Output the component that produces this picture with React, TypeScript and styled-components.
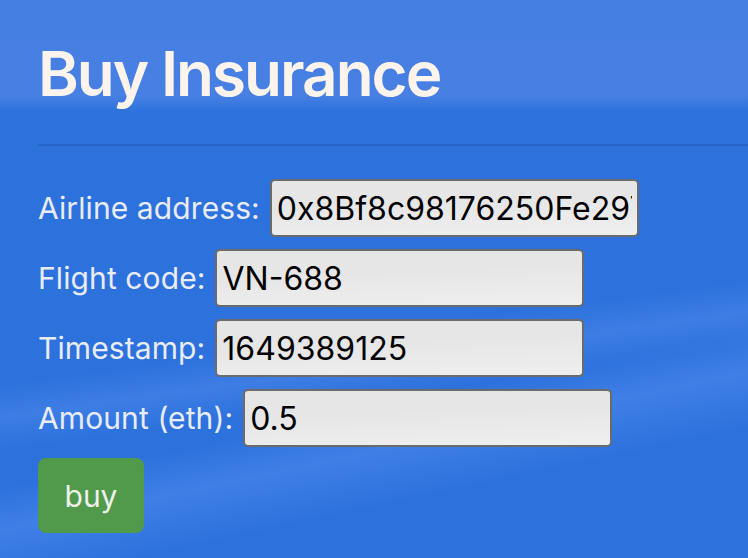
import styled, { createGlobalStyle } from 'styled-components'

const GlobalStyle = createGlobalStyle`
  html, body {
    margin: 0;
    padding: 0;
  }
  body {
    font-family: Inter, "Noto Sans", "Liberation Sans", sans-serif;
  }
`

const Page = styled.div`
  width: 748px;
  height: 558px;
  overflow: hidden;
  background:
    linear-gradient(172deg, rgba(255, 255, 255, 0) 58%, rgba(120, 170, 255, 0.22) 63%, rgba(255, 255, 255, 0) 68%),
    linear-gradient(168deg, rgba(255, 255, 255, 0) 68%, rgba(110, 165, 255, 0.28) 74%, rgba(255, 255, 255, 0) 82%),
    #2d71dd;
`

const Banner = styled.header`
  height: 112px;
  padding-left: 38px;
  box-sizing: border-box;
  background: linear-gradient(180deg, #467fe2 0, #477fe2 96px, #2d71dd 112px);
`

const Title = styled.h1`
  margin: 0;
  padding-top: 38px;
  font-size: 62px;
  line-height: 72px;
  font-weight: 600;
  letter-spacing: -2px;
  color: #fcf3ec;
`

const Divider = styled.hr`
  margin: 32px 0 0 38px;
  border: 0;
  height: 2px;
  background: #2865c6;
`

const Form = styled.form`
  display: flex;
  flex-direction: column;
  align-items: flex-start;
  gap: 12px;
  padding: 33px 0 0 38px;
`

const Row = styled.div`
  display: flex;
  align-items: center;
  gap: 10px;
`

const Label = styled.label`
  font-size: 30px;
  letter-spacing: 0.1px;
  color: #e8ecf4;
  white-space: nowrap;
`

const Field = styled.input`
  box-sizing: border-box;
  width: 369px;
  height: 58px;
  padding: 0 5px;
  border: 2px solid #6b6b6b;
  border-radius: 5px;
  background: linear-gradient(178deg, #e6e6e6 40%, #efefef 100%);
  font-family: Inter, "Noto Sans", "Liberation Sans", sans-serif;
  font-size: 32px;
  color: #000;
  outline: none;
`

const BuyButton = styled.button`
  margin-top: -1px;
  width: 106px;
  height: 75px;
  border: 0;
  border-radius: 8px;
  background: #519a4c;
  color: #eef0ea;
  font-family: Inter, "Noto Sans", "Liberation Sans", sans-serif;
  font-size: 30px;
  cursor: pointer;
`

const fields = [
  { label: 'Airline address:', value: '0x8Bf8c98176250Fe2976aC0E7d4B1bB39a5F8aD01' },
  { label: 'Flight code:', value: 'VN-688' },
  { label: 'Timestamp:', value: '1649389125' },
  { label: 'Amount (eth):', value: '0.5' },
]

export default function App() {
  return (
    <Page>
      <GlobalStyle />
      <Banner>
        <Title>Buy Insurance</Title>
      </Banner>
      <Divider />
      <Form onSubmit={(e) => e.preventDefault()}>
        {fields.map((f) => (
          <Row key={f.label}>
            <Label>{f.label}</Label>
            <Field defaultValue={f.value} />
          </Row>
        ))}
        <BuyButton type="submit">buy</BuyButton>
      </Form>
    </Page>
  )
}
